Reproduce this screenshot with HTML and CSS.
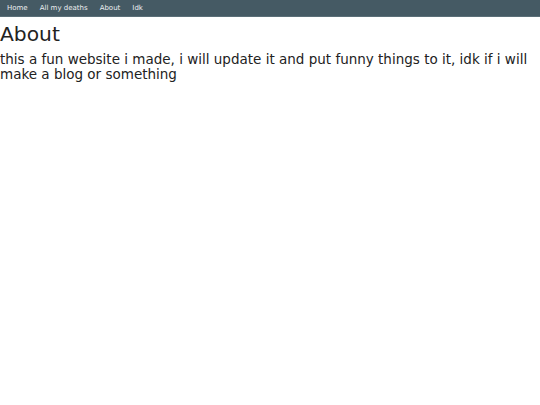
FILE: index.html
```html
<!doctype html>
<html>
<head>
  <meta charset="utf-8">
  <title>About</title>
  <link rel="stylesheet" href="styles.css">
</head>
<body>
  <div class="topnav">
    <a href="#">Home</a>
    <a href="#">All my deaths</a>
    <a href="#">About</a>
    <a href="#">Idk</a>
  </div>
  <h1>About</h1>
  <p>this a fun website i made, i will update it and put funny things to it, idk if i will make a blog or something</p>
</body>
</html>
```

FILE: styles.css
```css
body {
  margin: 0;
  font-family: "DejaVu Sans", sans-serif;
  color: #222;
  background: #fff;
}

.topnav {
  display: flex;
  height: 16px;
  align-items: center;
  background: #455a64;
  border-bottom: 1px solid #5b6f78;
  padding: 0 7px;
  gap: 12px;
}

.topnav a {
  color: #eceff1;
  text-decoration: none;
  font-size: 7px;
}

h1 {
  margin: 5px 0 0;
  font-size: 20.25px;
  font-weight: normal;
}

p {
  margin: 6px 0 0;
  font-size: 13.5px;
  line-height: 15px;
}
```
